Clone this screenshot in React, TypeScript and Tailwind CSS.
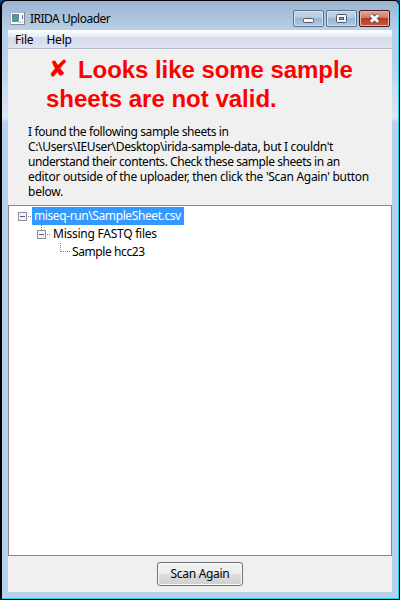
import type { ReactNode } from 'react';

function TitleBar() {
  return (
    <header className="flex h-[28px] shrink-0 items-start justify-between pl-[2px] pr-[2px]">
      <div className="flex items-center pt-[8px]">
        <svg className="mt-px" width="16" height="16" viewBox="0 0 16 16" shapeRendering="crispEdges">
          <rect x="0" y="1" width="15" height="13" fill="#858b90" />
          <rect x="0" y="1" width="14" height="12" fill="#b4b8bc" />
          <rect x="1" y="2" width="13" height="11" fill="#fff" />
          <rect x="2" y="3" width="7" height="8" fill="#5b87b0" />
          <rect x="3" y="4" width="5" height="7" fill="#4f9d84" />
          <rect x="12" y="4" width="1" height="4" fill="#3a6ea5" />
          <rect x="8" y="10" width="3" height="2" fill="#d0d0d0" />
          <rect x="12" y="10" width="1" height="2" fill="#d0d0d0" />
        </svg>
        <span className="ml-[4px] mt-[1px] text-[12px] leading-[16px] tracking-[-0.5px]">IRIDA Uploader</span>
      </div>
      <div className="flex gap-[2px] pt-[8px]">
        <Caption>
          <rect x="10.5" y="8.5" width="10" height="4" rx="1" fill="#f5f5f5" stroke="#535666" />
        </Caption>
        <Caption>
          <rect x="10.5" y="4.5" width="10" height="8" rx="1" fill="#f5f5f5" stroke="#535666" />
          <rect x="13.5" y="7.5" width="4" height="2" fill="#8fb0d0" stroke="#535666" />
        </Caption>
        <Caption close>
          <path d="M11.900 5.300L19.100 11.700M19.100 5.300L11.900 11.700" stroke="#535666" strokeWidth="4.800" />
          <path d="M11.900 5.300L19.100 11.700M19.100 5.300L11.900 11.700" stroke="#fff" strokeWidth="2.800" />
        </Caption>
      </div>
    </header>
  );
}

function Caption({ close, children }: { close?: boolean; children: ReactNode }) {
  const look = close
    ? 'border-[#4a1420] bg-[linear-gradient(#e0a49a_0%,#cf7869_45%,#b83a23_50%,#c9563c_100%)] shadow-[inset_0_0_0_1px_#e9b5ab]'
    : 'border-[#5f7388] bg-[linear-gradient(#c3d5e9_0%,#b4cae2_45%,#98b5d2_50%,#adc8e2_100%)] shadow-[inset_0_0_0_1px_#d3e2f2]';
  return (
    <div className={`h-[17px] w-[31px] rounded-[2px] border ${look}`}>
      <svg className="-ml-px -mt-px max-w-none" width="31" height="17" viewBox="0 0 31 17">{children}</svg>
    </div>
  );
}

function Toggle() {
  return (
    <svg className="shrink-0" width="14" height="9" viewBox="0 0 14 9" shapeRendering="crispEdges">
      <rect x="0.5" y="0.5" width="8" height="8" fill="#f3f3f3" stroke="#919191" />
      <path d="M2 4.5h5" stroke="#4b5fa8" />
      <path d="M10 4.5h1M12 4.5h1" stroke="#808080" />
    </svg>
  );
}

export default function App() {
  return (
    <div className="h-[600px] w-[400px] overflow-hidden bg-[#0b4a90] font-['Noto_Sans','Open_Sans',sans-serif] text-black">
      <div className="flex h-[600px] w-[400px] flex-col rounded-t-[6px] border-b border-l-2 border-r border-t border-black bg-black">
        <div className="flex min-h-0 flex-1 flex-col rounded-t-[5px] border-b border-r border-[#22d3ee] bg-[linear-gradient(#9ab3d0_0px,#b9d1ea_30px,#b9d1ea_60px,#dbe7f4_117px,#b9d1ea_121px)] pb-[6px] pl-[6px] pr-[6px] pt-[1px]">
          <TitleBar />
          <nav className="flex h-[19px] shrink-0 items-center gap-[14px] border-b border-[#b6bccc] bg-[linear-gradient(#fff_0%,#e6eaf5_38%,#d5daec_42%,#dfe4f3_100%)] pl-[7px] pt-[2px] text-[12px] tracking-[-0.2px]">
            <span>File</span>
            <span className="-ml-px tracking-[-0.2px]">Help</span>
          </nav>
          <main className="flex min-h-0 flex-1 flex-col bg-[#f0f0f0]">
            <h1 className="mt-[6px] h-[58px] shrink-0 whitespace-nowrap pl-[38px] font-['Liberation_Sans',sans-serif] text-[24px] font-bold leading-[29px] text-[#ff0000]">
              <span className="flex tracking-[-0.06px]">
                <span className="w-[32px] pl-[2px] font-['DejaVu_Sans']">✘</span>
                Looks like some sample
              </span>
              <span className="block">sheets are not valid.</span>
            </h1>
            <div className="mt-[11px] h-[81px] shrink-0 whitespace-nowrap pl-[20px] text-[12px] leading-[15px]">
              <p className="tracking-[-0.38px]">I found the following sample sheets in</p>
              <p className="tracking-[-0.34px]">C:\Users\IEUser\Desktop\irida-sample-data, but I couldn't</p>
              <p className="tracking-[-0.43px]">understand their contents. Check these sample sheets in an</p>
              <p className="tracking-[-0.29px]">editor outside of the uploader, then click the 'Scan Again' button</p>
              <p className="tracking-[-0.25px]">below.</p>
            </div>
            <div className="h-[351px] shrink-0 whitespace-nowrap border border-[#828790] bg-white pt-[1px] text-[12px] leading-[18px]">
              <div className="flex h-[18px] items-center pl-[9px]">
                <Toggle />
                <span className="w-[152px] shrink-0 bg-[#3399ff] pl-[2px] tracking-[-0.4px] text-white">miseq-run\SampleSheet.csv</span>
              </div>
              <div className="flex h-[18px] items-center pl-[28px]">
                <div className="flex h-[18px] flex-col">
                  <span className="ml-[4px] h-[5px] w-0 border-l border-dotted border-[#808080]" />
                  <Toggle />
                </div>
                <span className="ml-[2px] tracking-[-0.25px]">Missing FASTQ files</span>
              </div>
              <div className="flex h-[18px] items-center pl-[51px]">
                <span className="mb-[9px] h-[9px] w-[10px] border-b border-l border-dotted border-[#808080]" />
                <span className="ml-[2px] tracking-[-0.4px]">Sample hcc23</span>
              </div>
            </div>
            <footer className="flex justify-center pt-[6px]">
              <button className="h-[24px] w-[86px] rounded-[3px] border border-[#707070] bg-[linear-gradient(#f2f2f2_0%,#ebebeb_50%,#dddddd_50%,#cfcfcf_100%)] text-[12px] leading-[20px] tracking-[-0.3px] shadow-[inset_0_0_0_1px_#fcfcfc]">Scan Again</button>
            </footer>
          </main>
        </div>
      </div>
    </div>
  );
}
